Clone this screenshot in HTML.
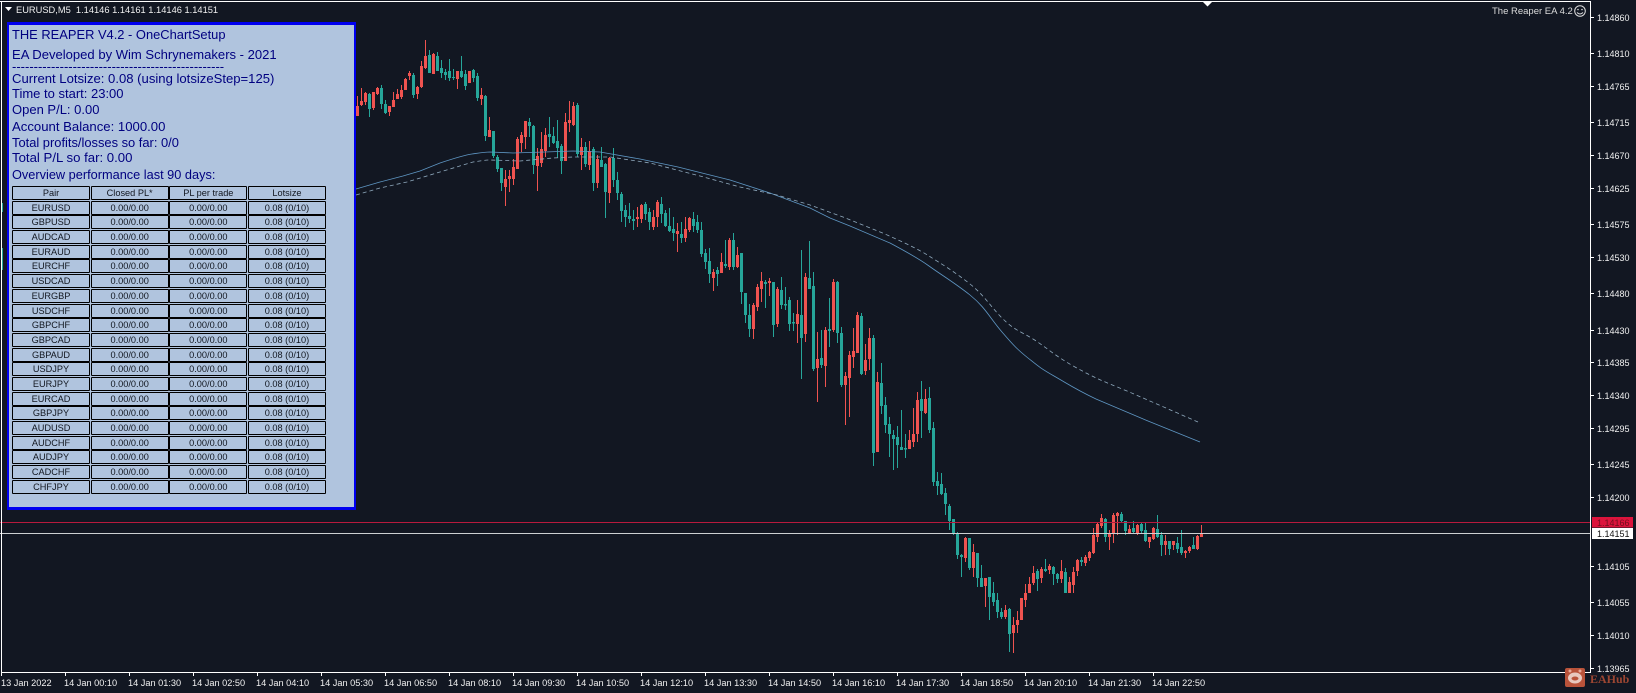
<!DOCTYPE html>
<html><head><meta charset="utf-8"><title>EURUSD,M5</title>
<style>
html,body{margin:0;padding:0;width:1636px;height:693px;overflow:hidden;background:#121722;font-family:"Liberation Sans",Arial,sans-serif}
svg{position:absolute;left:0;top:0}
#panel{position:absolute;left:7px;top:22px;width:349px;height:488px;box-sizing:border-box;background:#b0c4de;border:2px solid #0000f0;border-width:3px 2px 3px 2px}
.l{position:absolute;left:12px;font-size:13px;line-height:16px;color:#000080;white-space:nowrap}
#grid{position:absolute;left:12px;top:186px;display:grid;grid-template-columns:repeat(4,78.67px);grid-auto-rows:14.7px}
#grid div{box-sizing:border-box;width:78px;height:14px;border:1px solid #000;border-radius:1px;background:#b0c4de;font-size:9.2px;line-height:12px;text-align:center;color:#11161f;white-space:nowrap}
</style></head><body>
<svg width="1636" height="693" viewBox="0 0 1636 693" font-family="Liberation Sans, Arial, sans-serif">
<path fill="none" stroke="#26a69a" stroke-width="1" d="M2.5 203V212M2.5 248V270M369.5 93V117M381.5 85V109M385.5 100V114M413.5 73V98M429.5 50V73M437.5 52V71M441.5 60V78M445.5 69V80M449.5 59V81M453.5 69V80M461.5 56V78M465.5 70V90M473.5 69V82M477.5 73V101M485.5 95V141M493.5 131V158M497.5 155V172M501.5 168V191M529.5 118V137M533.5 125V174M549.5 117V147M553.5 127V144M557.5 120V158M561.5 144V174M577.5 103V157M585.5 142V167M593.5 147V191M601.5 147V167M605.5 163V218M613.5 148V187M617.5 172V200M621.5 192V222M625.5 205V227M629.5 203V223M633.5 210V230M645.5 202V220M649.5 208V230M661.5 197V223M665.5 210V227M669.5 208V232M673.5 217V241M681.5 222V243M693.5 212V232M697.5 215V233M701.5 222V257M705.5 249V269M709.5 248V283M717.5 267V286M725.5 240V268M733.5 233V270M741.5 253V304M745.5 293V323M749.5 304V337M765.5 280V308M773.5 282V337M781.5 277V309M785.5 287V310M789.5 297V331M793.5 313V331M801.5 250V379M809.5 241V289M813.5 272V371M821.5 330V368M829.5 298V347M837.5 281V343M841.5 327V387M861.5 313V375M873.5 335V466M881.5 363V414M885.5 397V433M889.5 417V457M893.5 430V470M897.5 426V468M901.5 410V450M905.5 434V458M921.5 381V438M929.5 387V433M933.5 422V486M937.5 472V495M941.5 473V495M945.5 488V515M949.5 504V530M953.5 519V535M957.5 532V559M961.5 554V577M969.5 538V570M977.5 553V587M981.5 565V587M989.5 577V620M993.5 582V606M997.5 593V618M1001.5 608V619M1009.5 608V652M1037.5 569V591M1045.5 559V572M1053.5 566V585M1057.5 573V583M1065.5 568V593M1081.5 557V566M1105.5 518V542M1121.5 512V522M1125.5 521V535M1133.5 521V533M1141.5 523V533M1145.5 523V542M1157.5 515V538M1161.5 532V556M1169.5 541V555M1177.5 537V553M1181.5 530V555M1193.5 537V549"/>
<path fill="none" stroke="#26a69a" stroke-width="3" d="M369.5 94V109M381.5 88V104M385.5 104V113M413.5 75V95M429.5 55V73M437.5 56V71M441.5 68V73M445.5 72V75M449.5 71V78M453.5 77V78M461.5 71V77M465.5 74V86M473.5 70V78M477.5 76V98M485.5 96V136M493.5 131V156M497.5 157V169M501.5 168V183M529.5 122V126M533.5 126V165M549.5 134V137M553.5 136V143M557.5 141V148M561.5 146V161M577.5 105V154M585.5 147V164M593.5 149V183M601.5 160V167M605.5 164V192M613.5 158V180M617.5 180V193M621.5 194V211M625.5 210V217M629.5 216V219M633.5 219V221M645.5 204V214M649.5 212V222M661.5 204V214M665.5 213V226M669.5 226V231M673.5 229V233M681.5 234V238M693.5 219V226M697.5 222V230M701.5 230V254M705.5 253V262M709.5 261V274M717.5 270V274M725.5 264V266M733.5 240V267M741.5 253V292M745.5 293V315M749.5 315V329M765.5 282V284M773.5 282V325M781.5 290V305M785.5 304V305.5M789.5 300V324M793.5 322V323.5M801.5 315V338M809.5 278V289M813.5 286V369M821.5 358V365M829.5 329V331M837.5 282V333M841.5 333V385M861.5 316V374M873.5 338V453M881.5 383V406M885.5 405V425M889.5 424V434M893.5 435V439M897.5 437V445M901.5 447V450M905.5 448V449.5M921.5 399V411M929.5 398V430M933.5 428V482M937.5 481V486M941.5 484V494M945.5 493V504M949.5 506V521M953.5 519V533M957.5 534V555M961.5 555V557M969.5 538V568M977.5 553V578M981.5 578V587M989.5 577V597M993.5 593V602M997.5 600V612M1001.5 612V617M1009.5 609V634M1037.5 571V579M1045.5 569V571M1053.5 567V574M1057.5 574V579M1065.5 572V593M1081.5 560V562M1105.5 519V537M1121.5 514V521M1125.5 521V531M1133.5 528V532M1141.5 524V531M1145.5 530V541M1157.5 529V537M1161.5 535V545M1169.5 541V549M1177.5 543V549M1181.5 547V553M1193.5 545V549"/>
<path fill="none" stroke="#ef5350" stroke-width="1" d="M357.5 96V116M361.5 88V106M365.5 92V105M373.5 92V110M377.5 87V95M389.5 106V116M393.5 92V107M397.5 89V99M401.5 85V99M405.5 78V90M409.5 71V80M417.5 86V99M421.5 61V88M425.5 40V69M433.5 53V74M457.5 71V89M469.5 71V83M481.5 88V105M489.5 117V137M505.5 170V206M509.5 170V192M513.5 159V185M517.5 137V169M521.5 132V152M525.5 121V149M537.5 148V191M541.5 132V167M545.5 128V157M565.5 113V161M569.5 101V132M573.5 102V126M581.5 138V170M589.5 141V170M597.5 155V188M609.5 157V203M637.5 207V227M641.5 204V223M653.5 210V230M657.5 200V227M677.5 223V252M685.5 217V242M689.5 217V232M713.5 269V291M721.5 253V273M729.5 238V270M737.5 247V268M753.5 303V339M757.5 284V311M761.5 272V302M769.5 278V296M777.5 287V327M797.5 300V343M805.5 273V342M817.5 332V402M825.5 327V387M833.5 279V332M845.5 372V425M849.5 351V417M853.5 328V368M857.5 312V353M865.5 344V375M869.5 328V370M877.5 372V452M909.5 430V449M913.5 408V447M917.5 392V442M925.5 389V414M965.5 537V562M973.5 544V577M985.5 578V607M1005.5 605V619M1013.5 617V653M1017.5 611V633M1021.5 598V620M1025.5 584V607M1029.5 577V593M1033.5 566V585M1041.5 567V583M1049.5 564V574M1061.5 560V583M1069.5 577V593M1073.5 567V593M1077.5 559V576M1085.5 555V566M1089.5 551V561M1093.5 528V554M1097.5 523V542M1101.5 514V528M1109.5 530V550M1113.5 513V543M1117.5 512V535M1129.5 525V534M1137.5 524V535M1149.5 537V548M1153.5 527V540M1165.5 535V555M1173.5 541V550M1185.5 550V558M1189.5 546V553M1197.5 535V550M1201.5 525V537"/>
<path fill="none" stroke="#ef5350" stroke-width="3" d="M357.5 106V116M361.5 101V105M365.5 93V102M373.5 92V108M377.5 88V94M389.5 106V112M393.5 100V107M397.5 94V99M401.5 90V97M405.5 79V90M409.5 73V76M417.5 87V94M421.5 66V87M425.5 56V68M433.5 54V74M457.5 71V79M469.5 71V83M481.5 95V99M489.5 130V137M505.5 179V187M509.5 176V179M513.5 167V179M517.5 139V169M521.5 135V143M525.5 121V137M537.5 156V166M541.5 149V163M545.5 135V151M565.5 122V161M569.5 120V123M573.5 106V125M581.5 147V155M589.5 151V165M597.5 159V183M609.5 158V193M637.5 217V219M641.5 205V219M653.5 217V227M657.5 202V217M677.5 231V234M685.5 229V238M689.5 218V230M713.5 272V278M721.5 262V273M729.5 240V267M737.5 255V267M753.5 305V329M757.5 287V307M761.5 281V289M769.5 281V283M777.5 289V324M797.5 314V324M805.5 277V334M817.5 359V368M825.5 330V366M833.5 282V330M845.5 376V385M849.5 355V378M853.5 351V357M857.5 315V353M865.5 360V371M869.5 338V359M877.5 382V452M909.5 440V449M913.5 434V442M917.5 400V434M925.5 399V413M965.5 538V558M973.5 552V568M985.5 578V586M1005.5 610V617M1013.5 625V633M1017.5 620V625M1021.5 598V620M1025.5 593V600M1029.5 584V593M1033.5 573V583M1041.5 569V578M1049.5 566V570M1061.5 571V579M1069.5 582V593M1073.5 572V585M1077.5 560V571M1085.5 557V563M1089.5 552V558M1093.5 535V553M1097.5 524V537M1101.5 518V526M1109.5 533V537M1113.5 515V533M1117.5 513V516M1129.5 529V533M1137.5 525V533M1149.5 537V542M1153.5 528V539M1165.5 541V545M1173.5 541V545M1185.5 551V553M1189.5 547V551M1197.5 536V549M1201.5 533V537"/>
<path fill="none" stroke="#5f97c4" stroke-width=".8" d="M356 189L380 182 403 176 420 171 440 163C455 158 465 155 472 154S485 152 490 152L513 153 545 152 573 151 600 152 640 159 678 167 730 180 770 193 810 208 830 218 850 226 890 243C905 251 918 258 929 266S955 283 970 295 990 318 1002 332 1018 350 1028 358 1040 368 1054 376 1075 389 1096 399L1148 421 1200 442"/>
<path fill="none" stroke="#8fa9bd" stroke-width=".8" stroke-dasharray="4 3" d="M356 195L380 188 407 182 440 172 473 162C480 161 485 160 490 160L520 161 553 158 573 157 610 157 650 163 700 176 740 187 777 195 810 205 843 217 885 234C905 243 918 249 929 256S955 272 970 284 990 306 1002 318 1020 331 1033 339 1055 356 1075 367 1100 380 1127 391L1198 422"/>
<rect x="0" y="522" width="1590" height="1" fill="#b81a3d"/>
<rect x="0" y="533" width="1590" height="1" fill="#cdd0d2"/>
<rect x="0" y="1" width="1591" height="1" fill="#fff"/>
<rect x="1" y="1" width="1" height="672" fill="#fff"/>
<rect x="1590" y="1" width="1" height="672" fill="#fff"/>
<rect x="1" y="672" width="1590" height="1" fill="#fff"/>
<path fill="#fff" d="M5 7h7l-3.5 4zM1203 2h9l-4.5 4.5z"/>
<text x="16" y="13" font-size="9.3" fill="#f0f0f0" xml:space="preserve">EURUSD,M5  1.14146 1.14161 1.14146 1.14151</text>
<text x="1492" y="14" font-size="9.5" fill="#dcdcdc">The Reaper EA 4.2</text>
<circle cx="1580" cy="11" r="5.3" fill="none" stroke="#ddd"/>
<circle cx="1578" cy="9.5" r=".8" fill="#ddd"/><circle cx="1582" cy="9.5" r=".8" fill="#ddd"/>
<path d="M1577 12.5q3 3 6 0" fill="none" stroke="#ddd"/>
<path stroke="#fff" stroke-width="1" d="M1591 17.5h3M1591 53.5h3M1591 86.5h3M1591 122.5h3M1591 155.5h3M1591 188.5h3M1591 224.5h3M1591 257.5h3M1591 293.5h3M1591 330.5h3M1591 362.5h3M1591 395.5h3M1591 428.5h3M1591 464.5h3M1591 497.5h3M1591 566.5h3M1591 602.5h3M1591 635.5h3M1591 668.5h3M1.5 673v3M65.5 673v3M129.5 673v3M193.5 673v3M257.5 673v3M321.5 673v3M385.5 673v3M449.5 673v3M513.5 673v3M577.5 673v3M641.5 673v3M705.5 673v3M769.5 673v3M833.5 673v3M897.5 673v3M961.5 673v3M1025.5 673v3M1089.5 673v3M1153.5 673v3"/>
<g font-size="9" fill="#f0f0f0">
<text x="1597" y="21">1.14860</text><text x="1597" y="57">1.14810</text><text x="1597" y="90">1.14765</text><text x="1597" y="126">1.14715</text><text x="1597" y="159">1.14670</text><text x="1597" y="192">1.14625</text><text x="1597" y="228">1.14575</text><text x="1597" y="261">1.14530</text><text x="1597" y="297">1.14480</text><text x="1597" y="334">1.14430</text><text x="1597" y="366">1.14385</text><text x="1597" y="399">1.14340</text><text x="1597" y="432">1.14295</text><text x="1597" y="468">1.14245</text><text x="1597" y="501">1.14200</text><text x="1597" y="570">1.14105</text><text x="1597" y="606">1.14055</text><text x="1597" y="639">1.14010</text><text x="1597" y="672">1.13965</text>
</g>
<rect x="1592" y="517" width="41" height="10.5" fill="#dc143c"/>
<rect x="1592" y="528" width="41" height="11" fill="#fff"/>
<text x="1597" y="526" font-size="9" fill="#70101f">1.14166</text>
<text x="1597" y="537" font-size="9" fill="#111">1.14151</text>
<g font-size="9.2" fill="#f0f0f0">
<text x="1" y="686">13 Jan 2022</text><text x="64" y="686">14 Jan 00:10</text><text x="128" y="686">14 Jan 01:30</text><text x="192" y="686">14 Jan 02:50</text><text x="256" y="686">14 Jan 04:10</text><text x="320" y="686">14 Jan 05:30</text><text x="384" y="686">14 Jan 06:50</text><text x="448" y="686">14 Jan 08:10</text><text x="512" y="686">14 Jan 09:30</text><text x="576" y="686">14 Jan 10:50</text><text x="640" y="686">14 Jan 12:10</text><text x="704" y="686">14 Jan 13:30</text><text x="768" y="686">14 Jan 14:50</text><text x="832" y="686">14 Jan 16:10</text><text x="896" y="686">14 Jan 17:30</text><text x="960" y="686">14 Jan 18:50</text><text x="1024" y="686">14 Jan 20:10</text><text x="1088" y="686">14 Jan 21:30</text><text x="1152" y="686">14 Jan 22:50</text>
</g>
<rect x="1565" y="668" width="20" height="19" rx="2" fill="#b9533a"/>
<circle cx="1570" cy="671" r="1.5" fill="#e8a898"/><circle cx="1580" cy="671" r="1.5" fill="#e8a898"/>
<ellipse cx="1575" cy="678" rx="7" ry="5.5" fill="#e8c9bf"/>
<ellipse cx="1575" cy="678.5" rx="3.5" ry="2" fill="#b9533a"/>
<text x="1590" y="683" font-size="12" font-weight="bold" font-family="Liberation Serif, serif" fill="#9c4632">EAHub</text>
</svg>
<div id="panel"></div>
<div class="l" style="top:27px;font-size:12.9px">THE REAPER V4.2 - OneChartSetup</div>
<div class="l" style="top:47px;font-size:13.05px">EA Developed by Wim Schrynemakers - 2021</div>
<div class="l" style="top:59px">-------------------------------------------------</div>
<div class="l" style="top:71px;font-size:13.1px">Current Lotsize: 0.08 (using lotsizeStep=125)</div>
<div class="l" style="top:86px">Time to start: 23:00</div>
<div class="l" style="top:102px">Open P/L: 0.00</div>
<div class="l" style="top:119px;font-size:13.15px">Account Balance: 1000.00</div>
<div class="l" style="top:135px;font-size:12.9px">Total profits/losses so far: 0/0</div>
<div class="l" style="top:150px;font-size:13.2px">Total P/L so far: 0.00</div>
<div class="l" style="top:167px;font-size:12.75px">Overview performance last 90 days:</div>
<div id="grid">
<div>Pair</div><div>Closed PL*</div><div>PL per trade</div><div>Lotsize</div>
<div>EURUSD</div><div>0.00/0.00</div><div>0.00/0.00</div><div>0.08 (0/10)</div>
<div>GBPUSD</div><div>0.00/0.00</div><div>0.00/0.00</div><div>0.08 (0/10)</div>
<div>AUDCAD</div><div>0.00/0.00</div><div>0.00/0.00</div><div>0.08 (0/10)</div>
<div>EURAUD</div><div>0.00/0.00</div><div>0.00/0.00</div><div>0.08 (0/10)</div>
<div>EURCHF</div><div>0.00/0.00</div><div>0.00/0.00</div><div>0.08 (0/10)</div>
<div>USDCAD</div><div>0.00/0.00</div><div>0.00/0.00</div><div>0.08 (0/10)</div>
<div>EURGBP</div><div>0.00/0.00</div><div>0.00/0.00</div><div>0.08 (0/10)</div>
<div>USDCHF</div><div>0.00/0.00</div><div>0.00/0.00</div><div>0.08 (0/10)</div>
<div>GBPCHF</div><div>0.00/0.00</div><div>0.00/0.00</div><div>0.08 (0/10)</div>
<div>GBPCAD</div><div>0.00/0.00</div><div>0.00/0.00</div><div>0.08 (0/10)</div>
<div>GBPAUD</div><div>0.00/0.00</div><div>0.00/0.00</div><div>0.08 (0/10)</div>
<div>USDJPY</div><div>0.00/0.00</div><div>0.00/0.00</div><div>0.08 (0/10)</div>
<div>EURJPY</div><div>0.00/0.00</div><div>0.00/0.00</div><div>0.08 (0/10)</div>
<div>EURCAD</div><div>0.00/0.00</div><div>0.00/0.00</div><div>0.08 (0/10)</div>
<div>GBPJPY</div><div>0.00/0.00</div><div>0.00/0.00</div><div>0.08 (0/10)</div>
<div>AUDUSD</div><div>0.00/0.00</div><div>0.00/0.00</div><div>0.08 (0/10)</div>
<div>AUDCHF</div><div>0.00/0.00</div><div>0.00/0.00</div><div>0.08 (0/10)</div>
<div>AUDJPY</div><div>0.00/0.00</div><div>0.00/0.00</div><div>0.08 (0/10)</div>
<div>CADCHF</div><div>0.00/0.00</div><div>0.00/0.00</div><div>0.08 (0/10)</div>
<div>CHFJPY</div><div>0.00/0.00</div><div>0.00/0.00</div><div>0.08 (0/10)</div>
</div>
</body></html>
